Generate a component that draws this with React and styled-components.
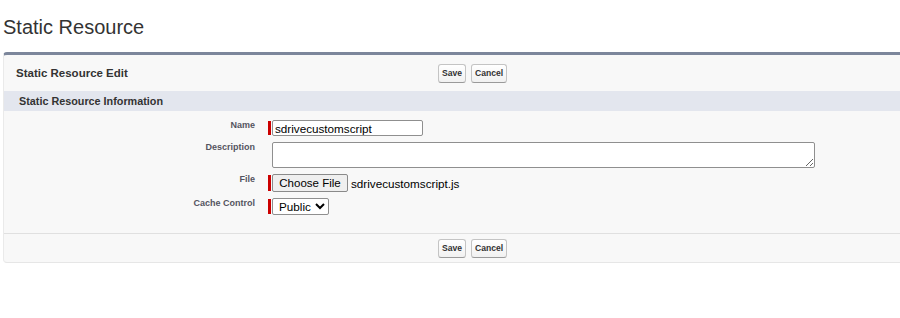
import styled, { createGlobalStyle } from 'styled-components';

const GlobalStyle = createGlobalStyle`
  html, body {
    margin: 0;
    padding: 0;
    background: #fff;
    overflow: hidden;
  }
  body {
    font-family: Arial, "Liberation Sans", sans-serif;
    color: #222;
  }
`;

export default function App() {
  return (
    <>
      <GlobalStyle />
      <SPage>
        <STitle>Static Resource</STitle>
        <SBlock>
          <SHeader>
            <SHeaderTitle>Static Resource Edit</SHeaderTitle>
            <SButtons>
              <SBtn type="button">Save</SBtn>
              <SBtn type="button">Cancel</SBtn>
            </SButtons>
          </SHeader>
          <SSubheader>Static Resource Information</SSubheader>
          <SForm>
            <SLabel>Name</SLabel>
            <SField $required>
              <STextInput type="text" defaultValue="sdrivecustomscript" />
            </SField>

            <SLabel>Description</SLabel>
            <SField>
              <STextArea />
            </SField>

            <SLabel>File</SLabel>
            <SField $required>
              <SFileButton type="button">Choose File</SFileButton>
              <SFileName>sdrivecustomscript.js</SFileName>
            </SField>

            <SLabel>Cache Control</SLabel>
            <SField $required>
              <SSelect defaultValue="Public">
                <option>Private</option>
                <option>Public</option>
              </SSelect>
            </SField>
          </SForm>
          <SFooter>
            <SButtons>
              <SBtn type="button">Save</SBtn>
              <SBtn type="button">Cancel</SBtn>
            </SButtons>
          </SFooter>
        </SBlock>
      </SPage>
    </>
  );
}

const SPage = styled.div`
  padding: 15px 0 0 3px;
`;

const STitle = styled.h1`
  margin: 0 0 13px 0;
  font-size: 20px;
  line-height: 24px;
  font-weight: normal;
  color: #333;
`;

const SBlock = styled.div`
  margin-right: -20px;
  background: #f8f8f8;
  border-top: 3px solid #7c869b;
  border-left: 1px solid #eaeaea;
  border-bottom: 1px solid #e6e6e6;
  border-radius: 4px 0 0 4px;
`;

const SHeader = styled.div`
  display: grid;
  grid-template-columns: 434px 1fr;
  align-items: center;
  height: 36px;
`;

const SHeaderTitle = styled.div`
  padding-left: 12px;
  font-size: 11.5px;
  font-weight: bold;
  color: #333;
`;

const SButtons = styled.div`
  display: flex;
  gap: 5px;
`;

const SBtn = styled.button`
  font-family: Arial, "Liberation Sans", sans-serif;
  font-size: 8.6px;
  font-weight: bold;
  color: #333;
  line-height: 11px;
  padding: 3px 3px;
  margin: 0;
  background: linear-gradient(#ffffff, #f1f1f1);
  border: 1px solid #c4c4c4;
  border-bottom-color: #9a9a9a;
  border-radius: 3px;
`;

const SSubheader = styled.div`
  height: 20px;
  line-height: 20px;
  padding-left: 15px;
  background: #e3e6ee;
  font-size: 10.8px;
  font-weight: bold;
  color: #333;
`;

const SForm = styled.div`
  display: grid;
  grid-template-columns: 251px 1fr;
  column-gap: 13px;
  row-gap: 6px;
  padding: 9px 0 18px 0;
`;

const SLabel = styled.div`
  text-align: right;
  font-size: 9px;
  line-height: 11px;
  font-weight: bold;
  color: #545460;
`;

const SField = styled.div`
  display: flex;
  align-items: center;
  padding-left: 4px;
  position: relative;

  &::before {
    content: '';
    display: ${(p) => (p.$required ? 'block' : 'none')};
    position: absolute;
    left: 0;
    top: 1px;
    bottom: 1px;
    width: 3px;
    background: #c00;
  }
`;

const STextInput = styled.input`
  box-sizing: border-box;
  width: 151px;
  height: 16px;
  padding: 0 2px;
  margin: 0;
  font-family: Arial, "Liberation Sans", sans-serif;
  font-size: 11.7px;
  color: #000;
  border: 1px solid #8f8f8f;
  border-radius: 2px;
  background: #fff;
  outline: none;
`;

const STextArea = styled.textarea`
  box-sizing: border-box;
  width: 543px;
  height: 26px;
  margin: 0;
  padding: 2px;
  border: 1px solid #8f8f8f;
  border-radius: 2px;
  background: #fff;
  resize: both;
  display: block;
`;

const SFileButton = styled.button`
  box-sizing: border-box;
  height: 18px;
  width: 76px;
  margin: 0;
  padding: 0;
  font-family: Arial, "Liberation Sans", sans-serif;
  font-size: 11.5px;
  color: #000;
  background: #efefef;
  border: 1px solid #8a8a8a;
  border-radius: 2px;
`;

const SFileName = styled.span`
  margin-left: 3px;
  font-size: 11.7px;
  color: #000;
`;

const SSelect = styled.select`
  box-sizing: border-box;
  width: 57px;
  height: 17px;
  margin: 0;
  padding: 0 0 0 2px;
  font-family: Arial, "Liberation Sans", sans-serif;
  font-size: 11.7px;
  color: #000;
  background: #fff;
  border: 1px solid #8f8f8f;
  border-radius: 2px;
`;

const SFooter = styled.div`
  border-top: 1px solid #e0e0e0;
  height: 29px;
  padding: 5px 0 0 434px;
  box-sizing: border-box;
`;
